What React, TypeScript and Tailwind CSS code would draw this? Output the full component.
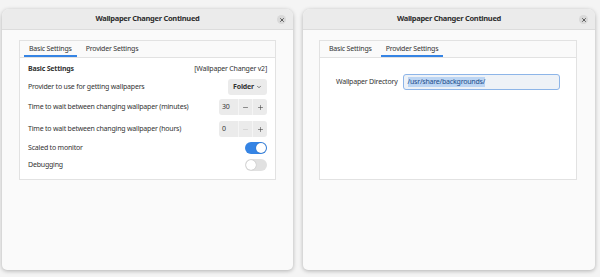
import { ChevronDown, Minus, Plus, X } from "lucide-react";

function TitleBar() {
  return (
    <div className="relative flex h-[21px] items-center justify-center rounded-t-[7px] border-b border-[#dcdcdc] bg-[#ebebeb]">
      <span className="text-[7.5px] font-bold tracking-[-0.3px] text-[#2e2e2e]">Wallpaper Changer Continued</span>
      <button className="absolute right-[7px] top-[6px] flex h-[9px] w-[9px] items-center justify-center rounded-full bg-[#d9d9d9]">
        <X className="h-[6px] w-[6px] text-[#333]" strokeWidth={3} />
      </button>
    </div>
  );
}

function Tabs({ active }: { active: number }) {
  const tabs = ["Basic Settings", "Provider Settings"];
  return (
    <div className="flex h-[17px] gap-[4px] border-b border-[#e2e2e2] bg-[#fafafa] pl-[4px]">
      {tabs.map((t, i) => (
        <div
          key={t}
          className={`flex items-center px-[5px] text-[7px] tracking-[-0.2px] text-[#333] ${
            i === active ? "border-b-2 border-[#3584e4] pt-[2px]" : ""
          }`}
        >
          {t}
        </div>
      ))}
    </div>
  );
}

function Spin({ value, minDisabled }: { value: string; minDisabled?: boolean }) {
  return (
    <div className="flex h-[16px] w-[48px] rounded-[3px] bg-[#ebebeb] text-[7px] text-[#333]">
      <div className="flex w-[19px] items-center pl-[3px]">{value}</div>
      <div className="flex w-[14px] items-center justify-center border-l border-[#f5f5f5]">
        <Minus className={`h-[7px] w-[7px] ${minDisabled ? "text-[#c4c4c4]" : "text-[#444]"}`} />
      </div>
      <div className="flex w-[15px] items-center justify-center border-l border-[#f5f5f5]">
        <Plus className="h-[7px] w-[7px] text-[#444]" />
      </div>
    </div>
  );
}

function Switch({ on }: { on?: boolean }) {
  return (
    <div
      className={`flex h-[12px] w-[22px] items-center rounded-full px-[1px] ${
        on ? "justify-end bg-[#3584e4]" : "justify-start bg-[#e1e1e1]"
      }`}
    >
      <div className="h-[10px] w-[10px] rounded-full bg-white shadow-[0_0_1px_rgba(0,0,0,0.35)]" />
    </div>
  );
}

function Window({ children }: { children: React.ReactNode }) {
  return (
    <div className="flex h-[261px] flex-col rounded-t-[7px] rounded-b-[5px] bg-[#fafafa] shadow-[0_1px_4px_rgba(0,0,0,0.28)]">
      <TitleBar />
      {children}
    </div>
  );
}

export default function App() {
  return (
    <div
      className="flex h-[277px] w-[600px] gap-[10px] bg-[#f4f4f4] pl-[2px] pt-[9px] text-[#333]"
      style={{ fontFamily: '"Noto Sans", "DejaVu Sans", sans-serif' }}
    >
      <div className="w-[291px]">
        <Window>
          <div className="ml-[17px] mt-[10px] w-[257px] border border-[#e2e2e2] bg-white">
            <Tabs active={0} />
            <div className="flex flex-col px-[8px] pb-[8px] pt-[5px] text-[7px] tracking-[-0.2px]">
              <div className="flex h-[12px] items-center justify-between">
                <span className="font-bold">Basic Settings</span>
                <span>[Wallpaper Changer v2]</span>
              </div>
              <div className="mt-[4px] flex h-[16px] items-center justify-between">
                <span>Provider to use for getting wallpapers</span>
                <div className="flex h-[16px] w-[39px] items-center justify-center gap-[2px] rounded-[3px] bg-[#ebebeb] font-bold">
                  Folder
                  <ChevronDown className="h-[6px] w-[6px]" strokeWidth={2.5} />
                </div>
              </div>
              <div className="mt-[4px] flex h-[16px] items-center justify-between">
                <span>Time to wait between changing wallpaper (minutes)</span>
                <Spin value="30" />
              </div>
              <div className="mt-[6px] flex h-[16px] items-center justify-between">
                <span>Time to wait between changing wallpaper (hours)</span>
                <Spin value="0" minDisabled />
              </div>
              <div className="mt-[5px] flex h-[12px] items-center justify-between">
                <span>Scaled to monitor</span>
                <Switch on />
              </div>
              <div className="mt-[5px] flex h-[12px] items-center justify-between">
                <span>Debugging</span>
                <Switch />
              </div>
            </div>
          </div>
        </Window>
      </div>
      <div className="w-[292px]">
        <Window>
          <div className="ml-[16px] mt-[10px] h-[140px] w-[258px] border border-[#e2e2e2] bg-white">
            <Tabs active={1} />
            <div className="flex items-center gap-[5px] pl-[16px] pt-[16px] text-[7px] tracking-[-0.2px]">
              <span>Wallpaper Directory</span>
              <div className="flex h-[16px] w-[157px] items-center rounded-[3px] border border-[#8db5e8] bg-[#eef2f7] pl-[4px]">
                <span className="bg-[#bcd5f3] text-[#1a4c8a]">/usr/share/backgrounds/</span>
              </div>
            </div>
          </div>
        </Window>
      </div>
    </div>
  );
}
